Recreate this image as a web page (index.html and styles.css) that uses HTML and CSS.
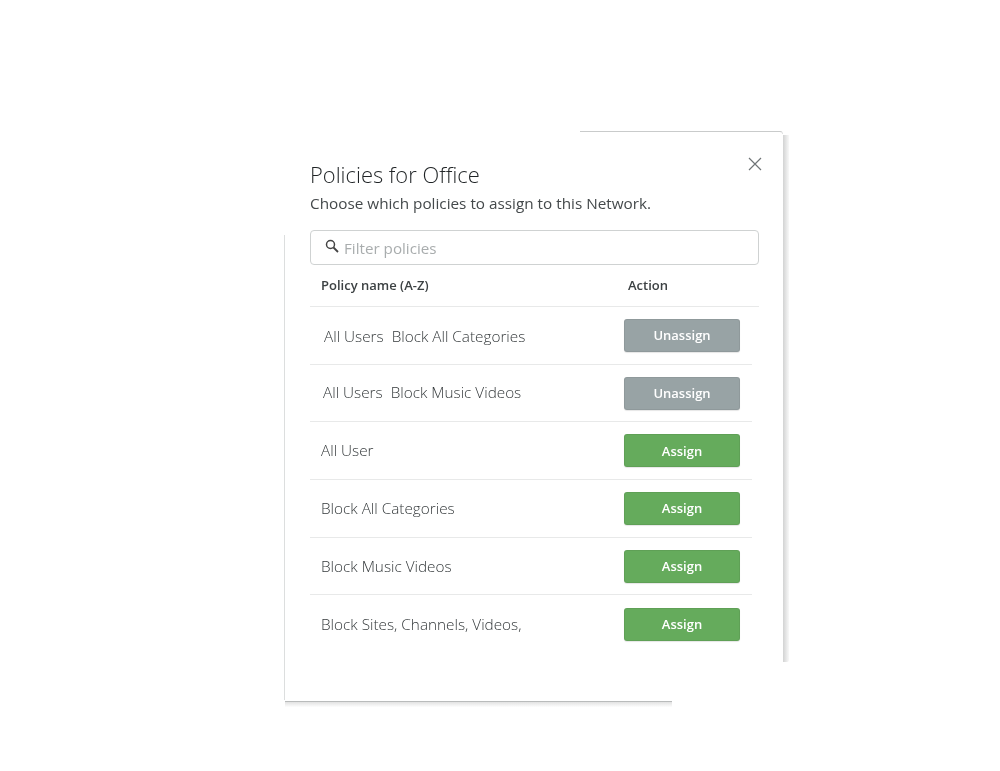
FILE: index.html
```html
<!DOCTYPE html>
<html lang="en">
<head>
<meta charset="utf-8">
<title>Policies for Office</title>
<link rel="stylesheet" href="styles.css">
</head>
<body>
<div class="modal">
  <span class="edge edge-top"></span>
  <span class="edge edge-right"></span>
  <span class="edge edge-left"></span>
  <span class="edge edge-bottom"></span>
  <svg class="close" width="16" height="16" viewBox="0 0 16 16" aria-label="Close"><path d="M2 2 L14 14 M14 2 L2 14" fill="none" stroke="#6f7476" stroke-width="1.2"/></svg>
  <h1 class="title">Policies for Office</h1>
  <p class="subtitle">Choose which policies to assign to this Network.</p>
  <div class="search">
    <svg class="search-icon" width="14" height="14" viewBox="0 0 14 14"><circle cx="5.5" cy="5.5" r="4" fill="none" stroke="#444" stroke-width="1.5"/><path d="M8.5 8.5 L13 13" fill="none" stroke="#444" stroke-width="1.8"/></svg>
    <span class="placeholder">Filter policies</span>
  </div>
  <div class="head">
    <span class="head-name">Policy name (A-Z)</span>
    <span class="head-action">Action</span>
  </div>
  <div class="row"><span class="name name-in2 name-first">All Users&nbsp; Block All Categories</span><button class="btn btn-grey">Unassign</button></div>
  <div class="row"><span class="name name-in1">All Users&nbsp; Block Music Videos</span><button class="btn btn-grey">Unassign</button></div>
  <div class="row"><span class="name">All User</span><button class="btn btn-green">Assign</button></div>
  <div class="row"><span class="name">Block All Categories</span><button class="btn btn-green">Assign</button></div>
  <div class="row"><span class="name">Block Music Videos</span><button class="btn btn-green">Assign</button></div>
  <div class="row row-last"><span class="name">Block Sites, Channels, Videos,</span><button class="btn btn-green">Assign</button></div>
</div>
</body>
</html>
```
FILE: styles.css
```css
* { box-sizing: border-box; }
html, body { margin: 0; background: #fff; }
body { height: 771px; overflow: hidden; font-family: "Open Sans", sans-serif; }
.modal {
  position: relative;
  width: 498px;
  height: 570px;
  margin: 131px 0 0 285px;
  padding: 28px 24px 0 25px;
  background: #fff;
  filter: blur(0.3px);
}
.edge { position: absolute; display: block; }
.edge-top { left: 295px; right: 0; top: 0; height: 3px; border-top: 1px solid #c9cbcb; border-right: 1px solid #e0e1e1; border-top-right-radius: 4px; }
.edge-right { left: 498px; top: 4px; width: 6px; height: 527px; background: linear-gradient(to right, #d2d3d3, #f8f8f8); border-bottom-right-radius: 2px; }
.edge-left { left: -1px; top: 104px; bottom: 1px; width: 1px; background: #dcdede; }
.edge-bottom { left: 0; width: 387px; top: 570px; height: 6px; border-top: 1px solid #b9bbbb; background: linear-gradient(to bottom, #e2e2e2, #fdfdfd); }
.close { position: absolute; left: 462px; top: 25px; }
.title { margin: 0; font-size: 21.9px; font-weight: 300; line-height: 32px; color: #1f2325; }
.subtitle { margin: 0; font-size: 15.3px; line-height: 24px; color: #44494b; }
.search {
  display: flex;
  align-items: center;
  gap: 5px;
  width: 449px;
  height: 35px;
  margin-top: 15px;
  padding-left: 14px;
  border: 1px solid #cfd2d2;
  border-radius: 4px;
}
.placeholder { font-size: 15.2px; color: #a9adae; }
.search-icon { flex: none; margin-top: -3px; }
.head {
  display: flex;
  width: 449px;
  height: 42px;
  padding: 0 0 2px 11px;
  align-items: center;
  font-size: 13px;
  font-weight: 600;
  color: #3c4143;
  border-bottom: 1px solid #e8e9e9;
}
.head-name { width: 307px; }
.row {
  display: flex;
  align-items: center;
  justify-content: space-between;
  width: 442px;
  height: 57.7px;
  padding: 0 12px 0 11px;
  border-bottom: 1px solid #e8e9e9;
}
.row-last { border-bottom: 0; }
.name { margin-top: -1px; font-size: 15.3px; font-weight: 300; color: #34393b; }
.name-in1 { margin-top: -2px; margin-left: 2px; }
.name-in2 { margin-left: 3px; }
.name-first { margin-top: 1px; }
.btn {
  width: 116px;
  height: 33px;
  padding: 0;
  border: 1px solid rgba(0,0,0,.06);
  border-radius: 3px;
  font: 600 13px "Open Sans", sans-serif;
  color: #fff;
  box-shadow: 0 1px 1px rgba(0,0,0,.1);
}
.btn-grey { background: #98a3a5; }
.btn-green { background: #65ab5c; }
```
